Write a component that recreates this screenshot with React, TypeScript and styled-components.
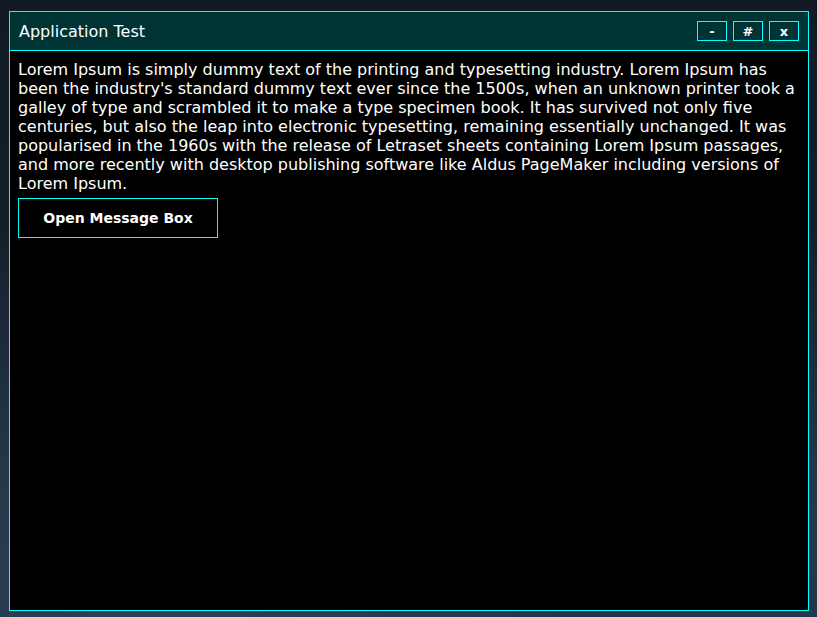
import styled, { createGlobalStyle } from "styled-components";

const GlobalStyle = createGlobalStyle`
  html, body {
    margin: 0;
    padding: 0;
    height: 100%;
  }
  body {
    font-family: "DejaVu Sans", "Liberation Sans", sans-serif;
    background:
      radial-gradient(ellipse at 20% 90%, #2c4256 0%, rgba(44, 66, 86, 0) 45%),
      radial-gradient(ellipse at 95% 85%, #22394d 0%, rgba(34, 57, 77, 0) 40%),
      linear-gradient(180deg, #111a24 0%, #16222f 60%, #243447 100%);
  }
`;

const Desktop = styled.div`
  width: 817px;
  height: 617px;
  padding: 11px 0 0 9px;
  box-sizing: border-box;
  overflow: hidden;
`;

const Window = styled.div`
  width: 800px;
  height: 600px;
  box-sizing: border-box;
  border: 1px solid #00ffff;
  background: #000;
  display: flex;
  flex-direction: column;
  color: #fff;
`;

const TitleBar = styled.div`
  height: 39px;
  box-sizing: border-box;
  background: #003333;
  border-bottom: 1px solid #00ffff;
  display: flex;
  align-items: center;
  justify-content: space-between;
  padding: 0 9px 0 9px;
`;

const Title = styled.div`
  font-size: 16px;
`;

const Controls = styled.div`
  display: flex;
  gap: 6px;
`;

const ControlButton = styled.button`
  width: 30px;
  height: 20px;
  box-sizing: border-box;
  border: 1px solid #00ffff;
  background: transparent;
  color: #fff;
  font-family: "DejaVu Sans", sans-serif;
  font-weight: 700;
  font-size: 13px;
  padding: 0;
  display: flex;
  align-items: center;
  justify-content: center;
`;

const Body = styled.div`
  flex: 1;
  padding: 9px 8px;
`;

const Text = styled.p`
  margin: 0;
  font-size: 16px;
  line-height: 19px;
`;

const ActionButton = styled.button`
  margin-top: 5px;
  width: 200px;
  height: 40px;
  box-sizing: border-box;
  border: 1px solid #00ffff;
  background: #000;
  color: #fff;
  font-family: "DejaVu Sans", sans-serif;
  font-weight: 700;
  font-size: 14px;
`;

export default function App() {
  return (
    <>
      <GlobalStyle />
      <Desktop>
        <Window>
          <TitleBar>
            <Title>Application Test</Title>
            <Controls>
              <ControlButton>-</ControlButton>
              <ControlButton>#</ControlButton>
              <ControlButton>x</ControlButton>
            </Controls>
          </TitleBar>
          <Body>
            <Text>
              Lorem Ipsum is simply dummy text of the printing and typesetting
              industry. Lorem Ipsum has been the industry's standard dummy text
              ever since the 1500s, when an unknown printer took a galley of
              type and scrambled it to make a type specimen book. It has
              survived not only five centuries, but also the leap into
              electronic typesetting, remaining essentially unchanged. It was
              popularised in the 1960s with the release of Letraset sheets
              containing Lorem Ipsum passages, and more recently with desktop
              publishing software like Aldus PageMaker including versions of
              Lorem Ipsum.
            </Text>
            <ActionButton>Open Message Box</ActionButton>
          </Body>
        </Window>
      </Desktop>
    </>
  );
}
